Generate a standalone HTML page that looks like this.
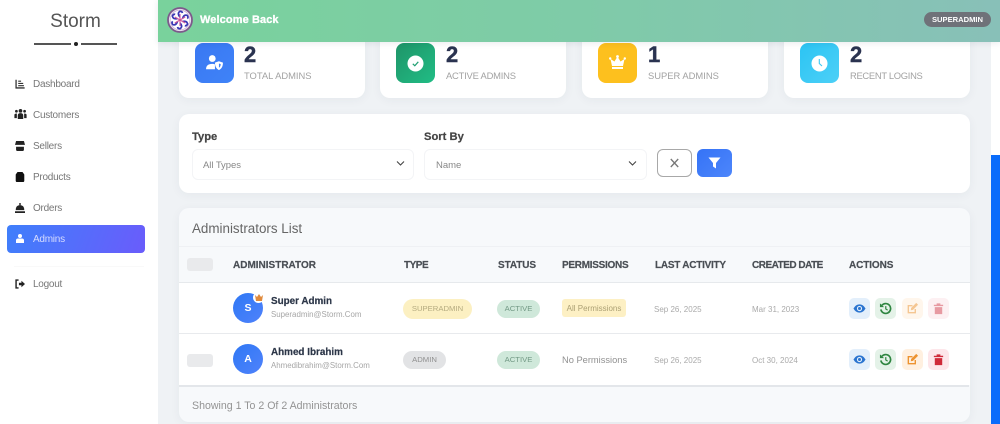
<!DOCTYPE html>
<html>
<head>
<meta charset="utf-8">
<style>
*{box-sizing:border-box;margin:0;padding:0}
html,body{width:1000px;height:424px;overflow:hidden;background:#eff2f5;font-family:"Liberation Sans",sans-serif}
body{filter:blur(.25px)}
.a{position:absolute;white-space:nowrap}
.nav{position:absolute;left:33px;font-size:10px;color:#777;line-height:14px;letter-spacing:-.25px;margin-top:1px}
.ni{position:absolute;left:15px;width:10px;height:10px;overflow:visible}
.card{position:absolute;top:30px;height:68px;width:186px;background:#fff;border-radius:10px;box-shadow:0 2px 10px rgba(30,50,80,.05)}
.ic{position:absolute;top:43px;width:39px;height:40px;border-radius:8px}
.num{position:absolute;top:43px;font:bold 22px/24px "Liberation Sans",sans-serif;color:#2a3350;-webkit-text-stroke:.4px #2a3350}
.lab{position:absolute;top:69px;font-size:9.4px;line-height:13px;color:#a2a2a2}
.th{position:absolute;top:259px;font:bold 10px/14px "Liberation Sans",sans-serif;color:#4a4f55;-webkit-text-stroke:.2px #4a4f55}
.pill{position:absolute;border-radius:11px;font-size:7.7px;text-align:center}
.date{position:absolute;font-size:8px;line-height:12px;color:#aaa;margin-top:1px}
.btn{position:absolute;width:21px;height:21px;border-radius:5px}
.btn svg{position:absolute;left:4px;top:4px;width:13px;height:13px}
</style>
</head>
<body>
<!-- right strip -->
<div class="a" style="left:991px;top:0;width:9px;height:155px;background:#fff"></div>
<div class="a" style="left:991px;top:155px;width:9px;height:269px;background:#0a6cfb"></div>

<!-- sidebar -->
<div class="a" style="left:0;top:0;width:158px;height:424px;background:#fff"></div>
<div class="a" style="left:0;width:151px;top:9px;text-align:center;font-size:19px;line-height:26px;color:#555">Storm</div>
<div class="a" style="left:34px;top:43px;width:37px;height:1.5px;background:#555"></div>
<div class="a" style="left:74px;top:42px;width:4px;height:4px;border-radius:50%;background:#222"></div>
<div class="a" style="left:81px;top:43px;width:36px;height:1.5px;background:#555"></div>

<svg class="ni" style="top:79px" viewBox="0 0 14 14"><path d="M1.500 1V12.500H13.500" fill="none" stroke="#333" stroke-width="1.800"/><path d="M4.500 3h4M4.500 6.200h7M4.500 9.400h8" stroke="#333" stroke-width="1.600"/></svg>
<div class="nav" style="top:77px">Dashboard</div>
<svg class="ni" style="left:14px;top:109px;width:13px;height:10px" viewBox="0 0 14 11"><g fill="#222"><circle cx="7" cy="2" r="2"/><circle cx="2.500" cy="2.500" r="1.500"/><circle cx="11.500" cy="2.500" r="1.500"/><path d="M4 11V7q0-2.500 3-2.500T10 7v4zM.3 10V6.500q0-1.500 2.700-1.500v5zM13.700 10V6.500q0-1.500-2.700-1.500v5z"/></g></svg>
<div class="nav" style="top:108px">Customers</div>
<svg class="ni" style="top:141px" viewBox="0 0 14 14"><g fill="#222"><path d="M1.500 0h11l1.500 5.500H0zM1.500 8h11v4.500q0 1.500-1.500 1.500H3q-1.500 0-1.500-1.500z"/></g></svg>
<div class="nav" style="top:139px">Sellers</div>
<svg class="ni" style="top:172px" viewBox="0 0 14 14"><path d="M3.500 0h7L13 3.500V12q0 2-2 2H3q-2 0-2-2V3.500z" fill="#111"/></svg>
<div class="nav" style="top:170px">Products</div>
<svg class="ni" style="top:203px" viewBox="0 0 14 14"><path d="M1 10q0-7 6-7t6 7zM0 11.500h14V14H0zM6 0h2v3H6z" fill="#222"/></svg>
<div class="nav" style="top:201px">Orders</div>
<div class="a" style="left:7px;top:225px;width:138px;height:28px;border-radius:4px;background:linear-gradient(110deg,#3f7ffb,#6a5cfb)"></div>
<svg class="ni" style="left:16px;top:234px;width:8px;height:9px" viewBox="0 0 8 9"><g fill="#fff"><circle cx="4" cy="2" r="2"/><path d="M0 9V6.500Q0 4.500 2 4.500h4q2 0 2 2V9z"/></g></svg>
<div class="nav" style="top:232px;color:#d6dcff">Admins</div>
<div class="a" style="left:14px;top:266px;width:130px;height:1px;background:#f9f9f9"></div>
<svg class="ni" style="top:279px" viewBox="0 0 14 14"><path d="M5 1.500H1.500v11H5" fill="none" stroke="#222" stroke-width="2"/><path d="M5.500 5.300h3.500V2.500L14 7l-5 4.500V8.700H5.500z" fill="#222"/></svg>
<div class="nav" style="top:277px">Logout</div>

<!-- stat cards -->
<div class="card" style="left:179px"></div>
<div class="card" style="left:380px"></div>
<div class="card" style="left:582px"></div>
<div class="card" style="left:784px"></div>

<div class="ic" style="left:195px;background:linear-gradient(135deg,#3a78f2,#3f83f8)"></div>
<svg class="a" style="left:205px;top:55px;width:19px;height:16px" viewBox="0 0 21 18"><g fill="#fff"><circle cx="8" cy="4" r="3.800"/><path d="M1 16q0-6 7-6 2 0 3 .5V16z"/><path d="M15.500 7l4.500 1.600c0 4-1.500 7-4.500 8.400-3-1.400-4.500-4.400-4.500-8.400z"/></g><path d="M15.500 9.500l2 .8c0 1.800-.7 3.300-2 4z" fill="#3f83f8"/></svg>
<div class="num" style="left:244px">2</div>
<div class="lab" style="left:244px">TOTAL ADMINS</div>

<div class="ic" style="left:396px;background:linear-gradient(135deg,#1f9468,#20bd85)"></div>
<svg class="a" style="left:407px;top:55px;width:17px;height:17px" viewBox="0 0 17 17"><circle cx="8.500" cy="8.500" r="8" fill="#fff"/><path d="M5.800 8.800l2 2 3.500-4" fill="none" stroke="#1f9f72" stroke-width="1.200"/></svg>
<div class="num" style="left:446px">2</div>
<div class="lab" style="left:446px;letter-spacing:-.2px">ACTIVE ADMINS</div>

<div class="ic" style="left:598px;background:#fdc01e"></div>
<svg class="a" style="left:609px;top:55px;width:17px;height:14px" viewBox="0 0 17 14"><path d="M8.500 1.500l3 5 4-2.500-1.500 7H3L1.500 4l4 2.500zM3 12h11v2H3z" fill="#fff"/><circle cx="8.500" cy="1.500" r="1.400" fill="#fff"/><circle cx="1.200" cy="3.500" r="1.200" fill="#fff"/><circle cx="15.800" cy="3.500" r="1.200" fill="#fff"/></svg>
<div class="num" style="left:648px">1</div>
<div class="lab" style="left:648px">SUPER ADMINS</div>

<div class="ic" style="left:800px;background:linear-gradient(135deg,#2bc4f3,#4dd0f7)"></div>
<svg class="a" style="left:811px;top:55px;width:17px;height:17px" viewBox="0 0 17 17"><circle cx="8.500" cy="8.500" r="8" fill="#fff"/><path d="M8.300 4v4.500l2.700 2.500" fill="none" stroke="#3cc8f4" stroke-width="1.100"/></svg>
<div class="num" style="left:850px">2</div>
<div class="lab" style="left:850px;letter-spacing:-.3px">RECENT LOGINS</div>

<!-- header -->
<div class="a" style="left:158px;top:0;width:842px;height:42px;background:linear-gradient(90deg,#79d29c,#7fcba8 50%,#88c0b8);box-shadow:0 1px 6px rgba(30,50,80,.1)"></div>
<svg class="a" style="left:167px;top:7px;width:26px;height:26px" viewBox="0 0 26 26"><circle cx="13" cy="13" r="12" fill="#e9dff0" stroke="#7d5a8c" stroke-width="1.800"/><circle cx="13" cy="13" r="9.800" fill="#fff" stroke="#c9a8c9" stroke-width=".6"/>
<g fill="none" stroke="#3a38b5" stroke-width="1.700"><path d="M13 10Q10 7 12.500 4.500 15 4 15.500 6"/><path transform="rotate(60 13 13)" d="M13 10Q10 7 12.500 4.500 15 4 15.500 6"/><path transform="rotate(120 13 13)" d="M13 10Q10 7 12.500 4.500 15 4 15.500 6"/><path transform="rotate(180 13 13)" d="M13 10Q10 7 12.500 4.500 15 4 15.500 6"/><path transform="rotate(240 13 13)" d="M13 10Q10 7 12.500 4.500 15 4 15.500 6"/><path transform="rotate(300 13 13)" d="M13 10Q10 7 12.500 4.500 15 4 15.500 6"/></g>
<g stroke="#d0569a" stroke-width="1.100"><path d="M13 7v12M7.800 10l10.400 6M7.800 16l10.400-6"/></g></svg>
<div class="a" style="left:200px;top:13px;font:bold 11px/15px 'Liberation Sans',sans-serif;color:#fff;letter-spacing:.1px;-webkit-text-stroke:.3px #fff">Welcome Back</div>
<div class="a" style="left:924px;top:12px;width:67px;height:15px;border-radius:8px;background:#6f7279;color:#fff;font:bold 7.600px/15px 'Liberation Sans',sans-serif;text-align:center">SUPERADMIN</div>

<!-- filter card -->
<div class="a" style="left:179px;top:114px;width:791px;height:79px;background:#fff;border-radius:10px;box-shadow:0 2px 10px rgba(30,50,80,.05)"></div>
<div class="a" style="left:192px;top:130px;font:bold 11.200px/15px 'Liberation Sans',sans-serif;color:#444;-webkit-text-stroke:.2px #444">Type</div>
<div class="a" style="left:424px;top:130px;font:bold 11.200px/15px 'Liberation Sans',sans-serif;color:#444;-webkit-text-stroke:.2px #444">Sort By</div>
<div class="a" style="left:192px;top:149px;width:222px;height:31px;border:1px solid #f3f4f6;border-radius:6px"></div>
<div class="a" style="left:424px;top:149px;width:223px;height:31px;border:1px solid #f3f4f6;border-radius:6px"></div>
<div class="a" style="left:203px;top:159px;font-size:9.500px;line-height:14px;color:#888;letter-spacing:-.05px">All Types</div>
<div class="a" style="left:436px;top:159px;font-size:9.500px;line-height:14px;color:#888">Name</div>
<svg class="a" style="left:396px;top:160px;width:9px;height:7px" viewBox="0 0 9 7"><path d="M1 1.500l3.500 3.500L8 1.500" fill="none" stroke="#444" stroke-width="1.100"/></svg>
<svg class="a" style="left:628px;top:160px;width:9px;height:7px" viewBox="0 0 9 7"><path d="M1 1.500l3.500 3.500L8 1.500" fill="none" stroke="#444" stroke-width="1.100"/></svg>
<div class="a" style="left:657px;top:149px;width:35px;height:28px;border:1px solid #a8a8a8;border-radius:6px;background:#fff"></div>
<svg class="a" style="left:670px;top:158px;width:9px;height:10px" viewBox="0 0 9 10"><path d="M.8 1l7.400 8M8.200 1L.8 9" stroke="#777" stroke-width="1.300"/></svg>
<div class="a" style="left:697px;top:149px;width:35px;height:28px;border-radius:6px;background:linear-gradient(135deg,#3573f6,#4d86fb)"></div>
<svg class="a" style="left:708px;top:157px;width:13px;height:12px" viewBox="0 0 13 12"><path d="M.5.500h12L8 6v5.500L5 9.500V6z" fill="#fff"/></svg>

<!-- list card -->
<div class="a" style="left:179px;top:208px;width:791px;height:214px;background:#f7f9fb;border-radius:10px;box-shadow:0 2px 10px rgba(30,50,80,.05)"></div>
<div class="a" style="left:192px;top:220px;font-size:13.400px;line-height:18px;color:#666">Administrators List</div>
<div class="a" style="left:179px;top:246px;width:791px;height:1px;background:#eff1f4"></div>
<div class="a" style="left:179px;top:282px;width:791px;height:103px;background:#fff"></div>
<div class="a" style="left:179px;top:282px;width:791px;height:1px;background:#e6e9ec"></div>
<div class="a" style="left:179px;top:333px;width:791px;height:1px;background:#e8eaed"></div>
<div class="a" style="left:179px;top:385px;width:790px;height:1.500px;background:#e3e6ea"></div>

<div class="a" style="left:187px;top:258px;width:26px;height:13px;border-radius:3px;background:#e9eaec"></div>
<div class="th" style="left:233px">ADMINISTRATOR</div>
<div class="th" style="left:404px;letter-spacing:-.5px">TYPE</div>
<div class="th" style="left:498px;letter-spacing:-.1px">STATUS</div>
<div class="th" style="left:562px;letter-spacing:-.28px">PERMISSIONS</div>
<div class="th" style="left:655px;letter-spacing:-.25px">LAST ACTIVITY</div>
<div class="th" style="left:752px;letter-spacing:-.5px">CREATED DATE</div>
<div class="th" style="left:849px;letter-spacing:-.1px">ACTIONS</div>

<!-- row 1 -->
<div class="a" style="left:233px;top:293px;width:30px;height:30px;border-radius:50%;background:linear-gradient(135deg,#2f78f5,#4f82fb);color:#fff;font:bold 10.500px/30px 'Liberation Sans',sans-serif;text-align:center">S</div>
<div class="a" style="left:253px;top:292px;width:11px;height:11px;border-radius:50%;background:#fff"></div>
<svg class="a" style="left:255px;top:294px;width:8px;height:7px" viewBox="0 0 8 7"><path d="M0 1l2 2 2-3 2 3 2-2-1 6H1z" fill="#e08a3c"/></svg>
<div class="a" style="left:271px;top:295px;font:bold 9.900px/14px 'Liberation Sans',sans-serif;color:#2c3648;-webkit-text-stroke:.2px #2c3648">Super Admin</div>
<div class="a" style="left:271px;top:309px;font-size:7.900px;line-height:12px;color:#a6a6a6">Superadmin@Storm.Com</div>
<div class="pill" style="left:403px;top:299px;width:69px;height:20px;line-height:20px;background:#fcf0c2;color:#b5ab80">SUPERADMIN</div>
<div class="pill" style="left:497px;top:300px;width:43px;height:18px;line-height:18px;background:#cfe8da;color:#739a86">ACTIVE</div>
<div class="a" style="left:562px;top:299px;width:64px;height:18px;line-height:19px;border-radius:3px;background:#fdf0c4;color:#aca074;font-size:8px;text-align:center">All Permissions</div>
<div class="date" style="left:654px;top:303px">Sep 26, 2025</div>
<div class="date" style="left:752px;top:303px">Mar 31, 2023</div>
<div class="btn" style="left:849px;top:298px;background:#e3effb"><svg viewBox="0 0 14 14"><path d="M.5 7Q3 2.500 7 2.500T13.500 7Q11 11.500 7 11.500T.5 7z" fill="#2a74d0"/><circle cx="7" cy="7" r="2.800" fill="#e3effb"/><circle cx="7" cy="7" r="1.600" fill="#2a74d0"/></svg></div>
<div class="btn" style="left:875px;top:298px;background:#e4f2e8"><svg viewBox="0 0 14 14"><path d="M3.200 3.500A5.300 5.300 0 1 1 2 8" fill="none" stroke="#2e8540" stroke-width="1.800"/><path d="M1 1.500l4.500 4H1z" fill="#2e8540"/><path d="M7.300 4.500V7.500l2 1.300" fill="none" stroke="#2e8540" stroke-width="1.300"/></svg></div>
<div class="btn" style="left:902px;top:298px;background:#fff6ec;opacity:.95"><svg viewBox="0 0 14 14"><path d="M10 7.500v4H2.500V4H7" fill="none" stroke="#f5c48d" stroke-width="1.500"/><path d="M5.500 6.500L11 1l2 2-5.500 5.500-2.300.4z" fill="#f5c48d"/></svg></div>
<div class="btn" style="left:928px;top:298px;background:#fdf0f2"><svg viewBox="0 0 14 14"><path d="M2 3h10v1.500H2zM5 1.500h4V3H5zM3 5.500h8V13H3z" fill="#e79aa2"/></svg></div>

<!-- row 2 -->
<div class="a" style="left:187px;top:354px;width:26px;height:13px;border-radius:3px;background:#e9eaec"></div>
<div class="a" style="left:233px;top:344px;width:30px;height:30px;border-radius:50%;background:linear-gradient(135deg,#2f78f5,#4f82fb);color:#fff;font:bold 10.500px/30px 'Liberation Sans',sans-serif;text-align:center">A</div>
<div class="a" style="left:271px;top:346px;font:bold 9.900px/14px 'Liberation Sans',sans-serif;color:#2c3648;-webkit-text-stroke:.2px #2c3648">Ahmed Ibrahim</div>
<div class="a" style="left:271px;top:360px;font-size:7.900px;line-height:12px;color:#a6a6a6">Ahmedibrahim@Storm.Com</div>
<div class="pill" style="left:403px;top:351px;width:43px;height:18px;line-height:18px;background:#e2e3e5;color:#909090">ADMIN</div>
<div class="pill" style="left:497px;top:351px;width:43px;height:18px;line-height:18px;background:#cfe8da;color:#739a86">ACTIVE</div>
<div class="a" style="left:562px;top:353px;font-size:9.300px;line-height:14px;color:#919191">No Permissions</div>
<div class="date" style="left:654px;top:354px">Sep 26, 2025</div>
<div class="date" style="left:752px;top:354px">Oct 30, 2024</div>
<div class="btn" style="left:849px;top:349px;background:#e3effb"><svg viewBox="0 0 14 14"><path d="M.5 7Q3 2.500 7 2.500T13.500 7Q11 11.500 7 11.500T.5 7z" fill="#2a74d0"/><circle cx="7" cy="7" r="2.800" fill="#e3effb"/><circle cx="7" cy="7" r="1.600" fill="#2a74d0"/></svg></div>
<div class="btn" style="left:875px;top:349px;background:#e4f2e8"><svg viewBox="0 0 14 14"><path d="M3.200 3.500A5.300 5.300 0 1 1 2 8" fill="none" stroke="#2e8540" stroke-width="1.800"/><path d="M1 1.500l4.500 4H1z" fill="#2e8540"/><path d="M7.300 4.500V7.500l2 1.300" fill="none" stroke="#2e8540" stroke-width="1.300"/></svg></div>
<div class="btn" style="left:902px;top:349px;background:#fff0e0"><svg viewBox="0 0 14 14"><path d="M10 7.500v4H2.500V4H7" fill="none" stroke="#ed9330" stroke-width="1.500"/><path d="M5.500 6.500L11 1l2 2-5.500 5.500-2.300.4z" fill="#ed9330"/></svg></div>
<div class="btn" style="left:928px;top:349px;background:#fde6ea"><svg viewBox="0 0 14 14"><path d="M2 3h10v1.500H2zM5 1.500h4V3H5zM3 5.500h8V13H3z" fill="#cf2a3a"/></svg></div>

<div class="a" style="left:192px;top:399px;font-size:10.600px;line-height:15px;color:#939393">Showing 1 To 2 Of 2 Administrators</div>
</body>
</html>
